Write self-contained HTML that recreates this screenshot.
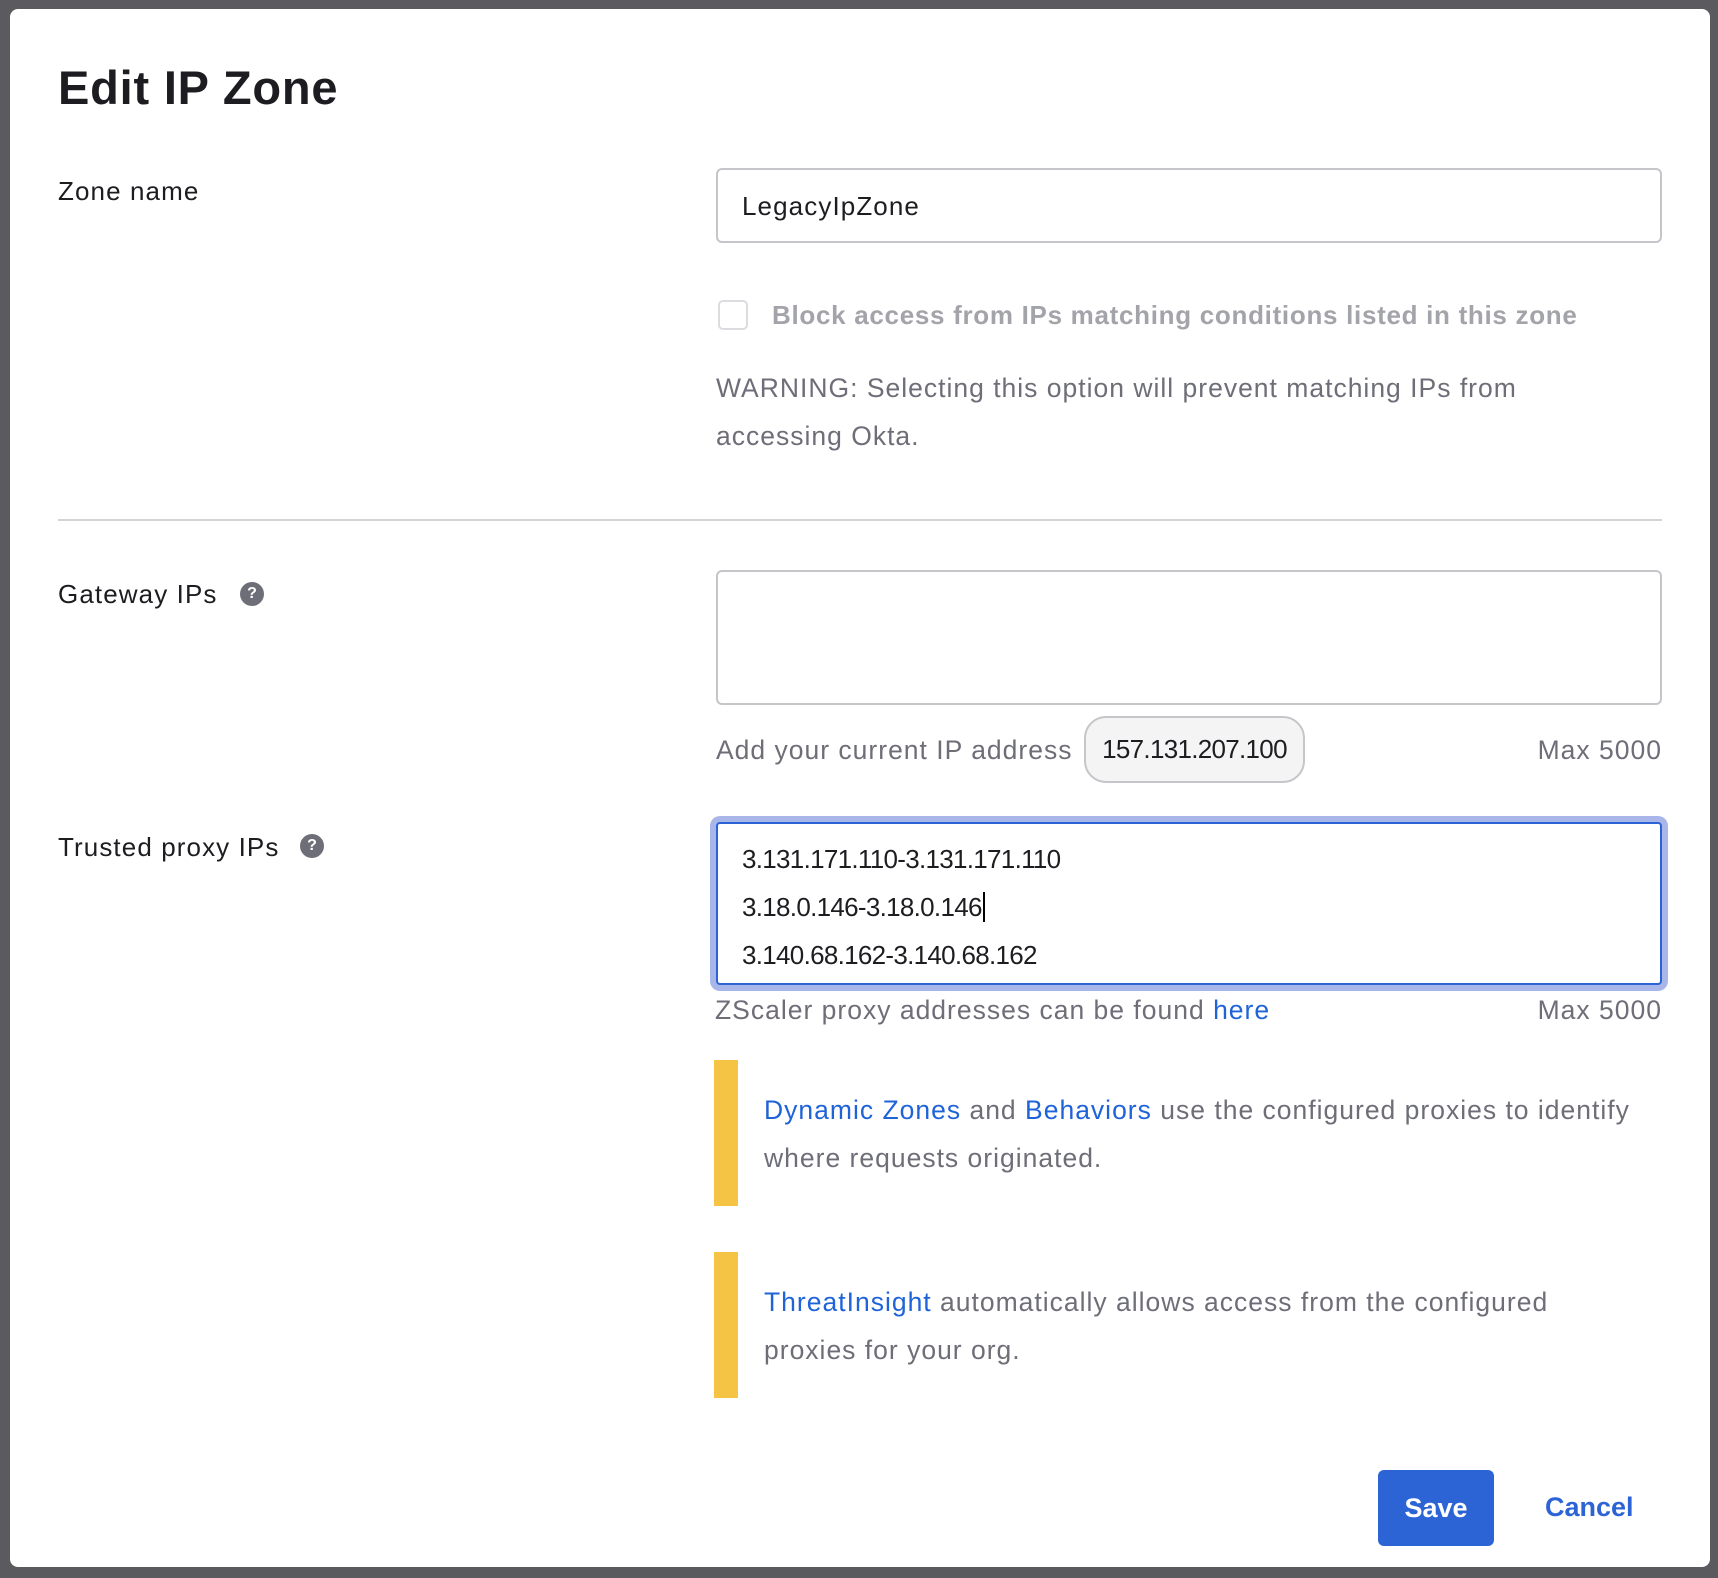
<!DOCTYPE html>
<html><head><meta charset="utf-8"><style>
*{margin:0;padding:0;box-sizing:border-box}
body{width:1718px;height:1578px;background:#5b5b5f;font-family:"Liberation Sans",sans-serif;position:relative;overflow:hidden}
.panel{position:absolute;left:10px;top:9px;width:1700px;height:1558px;background:#fff;border-radius:8px}
.a{position:absolute;white-space:nowrap}
.lbl{font-size:26px;color:#1d1d21;letter-spacing:1.1px}
.g{color:#6e6e78;font-size:26.5px;letter-spacing:1px}
.ip{font-size:26px;color:#1d1d21;letter-spacing:-0.7px}
.lnk{color:#1f63d8}
.q{position:absolute;width:24px;height:24px;border-radius:50%;background:#6e6e78;color:#fff;font-size:16px;font-weight:bold;text-align:center;line-height:24px}
.box{position:absolute;border:2px solid #c5c5ca;border-radius:6px;background:#fff}
.bar{position:absolute;width:24px;background:#f5c445}
</style></head><body>
<div class="panel"></div>
<div class="a" style="left:58px;top:60px;font-size:47px;font-weight:bold;color:#1d1d21;letter-spacing:0.8px">Edit IP Zone</div>
<div class="a lbl" style="left:58px;top:176px">Zone name</div>
<div class="box" style="left:716px;top:168px;width:946px;height:75px"></div>
<div class="a lbl" style="left:742px;top:191px">LegacyIpZone</div>
<div class="a" style="left:718px;top:300px;width:30px;height:30px;border:2px solid #dcdce0;border-radius:5px"></div>
<div class="a" style="left:772px;top:300px;font-size:26px;font-weight:bold;color:#a3a3aa;letter-spacing:0.7px">Block access from IPs matching conditions listed in this zone</div>
<div class="a g" style="left:716px;top:373px">WARNING: Selecting this option will prevent matching IPs from</div>
<div class="a g" style="left:716px;top:421px">accessing Okta.</div>
<div class="a" style="left:58px;top:519px;width:1604px;height:2px;background:#d4d4d8"></div>
<div class="a lbl" style="left:58px;top:579px">Gateway IPs</div>
<div class="q" style="left:240px;top:582px">?</div>
<div class="box" style="left:716px;top:570px;width:946px;height:135px"></div>
<div class="a g" style="left:716px;top:735px">Add your current IP address</div>
<div class="a ip" style="left:1084px;top:716px;width:221px;height:67px;border:2px solid #c5c5ca;border-radius:22px;background:#f4f4f5;text-align:center;line-height:63px">157.131.207.100</div>
<div class="a g" style="right:56px;top:735px">Max 5000</div>
<div class="a lbl" style="left:58px;top:832px">Trusted proxy IPs</div>
<div class="q" style="left:300px;top:834px">?</div>
<div class="a" style="left:710px;top:816px;width:958px;height:175px;border-radius:10px;background:#a9b6ea"></div>
<div class="a" style="left:716px;top:822px;width:946px;height:163px;border:2px solid #2c64d6;border-radius:4px;background:#fff"></div>
<div class="a ip" style="left:742px;top:844px">3.131.171.110-3.131.171.110</div>
<div class="a ip" style="left:742px;top:892px">3.18.0.146-3.18.0.146<span style="border-left:2px solid #000;margin-left:1px"></span></div>
<div class="a ip" style="left:742px;top:940px">3.140.68.162-3.140.68.162</div>
<div class="a g" style="left:715px;top:995px">ZScaler proxy addresses can be found <span class="lnk">here</span></div>
<div class="a g" style="right:56px;top:995px">Max 5000</div>
<div class="bar" style="left:714px;top:1060px;height:146px"></div>
<div class="a g" style="left:764px;top:1095px">
<span class="lnk">Dynamic Zones</span> and <span class="lnk">Behaviors</span> use the configured proxies to identify</div>
<div class="a g" style="left:764px;top:1143px">where requests originated.</div>
<div class="bar" style="left:714px;top:1252px;height:146px"></div>
<div class="a g" style="left:764px;top:1287px"><span class="lnk">ThreatInsight</span> automatically allows access from the configured</div>
<div class="a g" style="left:764px;top:1335px">proxies for your org.</div>
<div class="a" style="left:1378px;top:1470px;width:116px;height:76px;background:#2c64d6;border-radius:6px;color:#fff;font-size:27px;font-weight:bold;text-align:center;line-height:76px">Save</div>
<div class="a" style="left:1545px;top:1492px;font-size:27px;font-weight:bold;color:#2c64d6">Cancel</div>
</body></html>
